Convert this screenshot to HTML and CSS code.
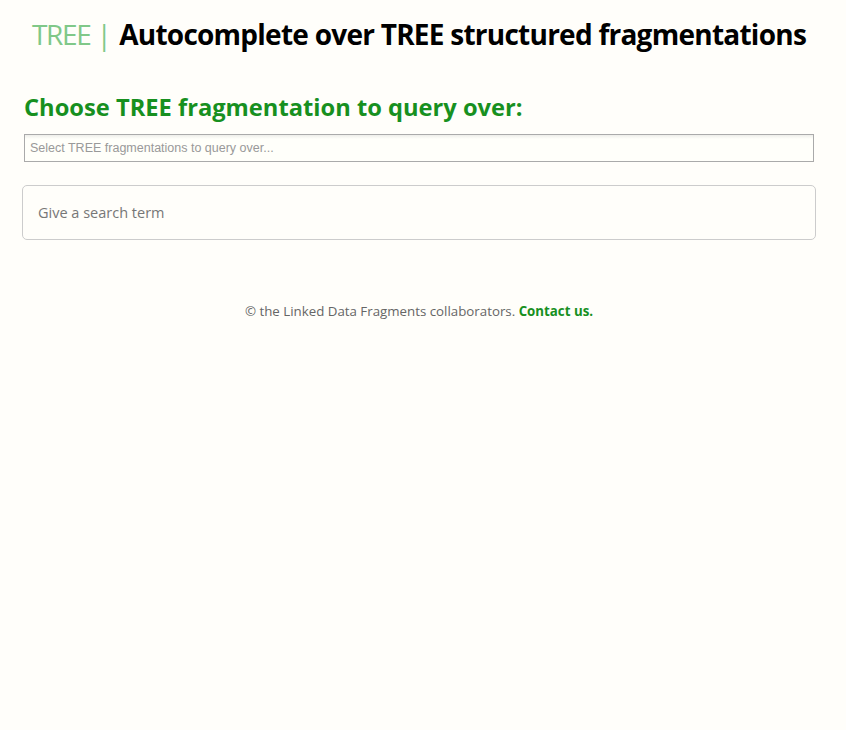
FILE: index.html
```html
<!DOCTYPE html>
<html>
<head>
<meta charset="utf-8">
<link rel="stylesheet" href="styles.css">
</head>
<body>
<div class="page">
  <h1 class="title"><span class="brand">TREE <span class="bar">|</span></span> Autocomplete over TREE structured fragmentations</h1>
  <h2 class="choose">Choose TREE fragmentation to query over:</h2>
  <div class="select">Select TREE fragmentations to query over...</div>
  <div class="search">Give a search term</div>
  <p class="footer">© the Linked Data Fragments collaborators. <a href="#">Contact us.</a></p>
</div>
</body>
</html>
```
FILE: styles.css
```css
html, body {
  margin: 0;
  padding: 0;
  background: #fffefa;
}
body {
  font-family: "Open Sans", sans-serif;
  color: #333;
}
.page {
  padding: 0 30px 0 22px;
}
.title {
  margin: 0;
  padding-top: 14px;
  text-align: center;
  font-size: 28px;
  font-weight: 700;
  letter-spacing: -0.75px;
  line-height: 40px;
  color: #000;
  white-space: nowrap;
}
.brand {
  font-weight: 400;
  color: #80c888;
  letter-spacing: -1.3px;
  margin-right: 2px;
}
.choose {
  margin: 0;
  padding: 38px 0 0 2px;
  font-size: 23.7px;
  line-height: 30px;
  font-weight: 700;
  color: #17901f;
}
.select {
  margin: 12px 2px 0 2px;
  height: 26px;
  border: 1px solid #aaa;
  background: linear-gradient(#eeeeea 0, #fffffa 4px);
  font-family: "Liberation Sans", Arial, sans-serif;
  font-size: 12.5px;
  line-height: 26px;
  padding-left: 5px;
  color: #999;
}
.search {
  margin-top: 23px;
  height: 53px;
  border: 1px solid #ccc;
  border-radius: 5px;
  padding-left: 15px;
  font-size: 14.5px;
  line-height: 53px;
  color: #777;
}
.footer {
  margin: 62px 0 0 0;
  text-align: center;
  font-size: 13.3px;
  color: #666;
}
.footer a {
  color: #17901f;
  font-weight: 700;
  text-decoration: none;
}
```
